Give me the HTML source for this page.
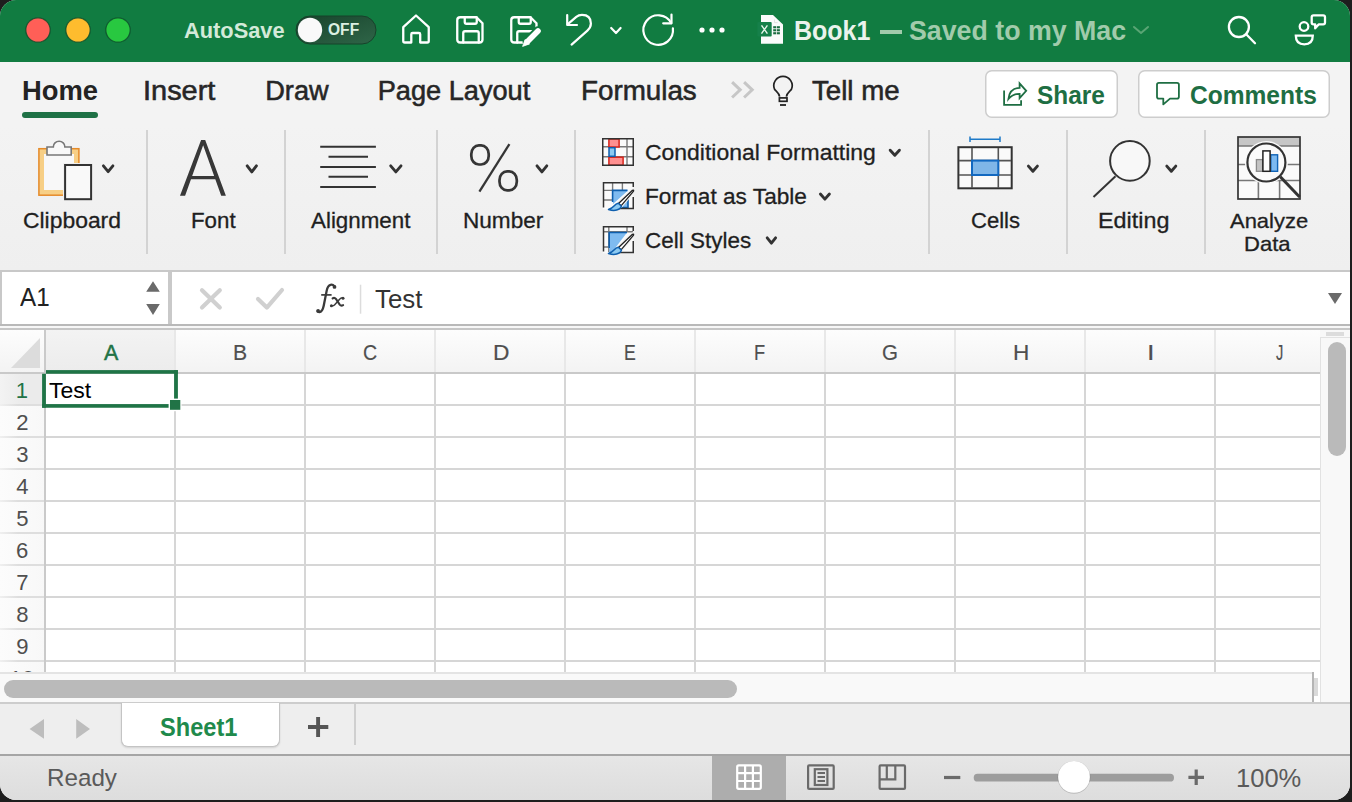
<!DOCTYPE html>
<html><head><meta charset="utf-8"><title>Excel</title>
<style>
html,body{margin:0;padding:0;width:1352px;height:802px;overflow:hidden;background:#1e1e1e;}
#win{position:absolute;left:0;top:0;width:1350px;height:800px;border-radius:16px;overflow:hidden;background:#f0f0f0;}
.t{position:absolute;white-space:nowrap;transform-origin:0 0;}
.a{position:absolute;}
svg{position:absolute;overflow:visible;}
</style></head><body><div id="win">
<div class="a" style="left:0px;top:0px;width:1350px;height:62px;background:#117c41;"></div>
<div class="a" style="left:0px;top:62px;width:1350px;height:64px;background:#f3f3f3;"></div>
<div class="a" style="left:0px;top:126px;width:1350px;height:144px;background:linear-gradient(#f3f3f3,#efefef);"></div>
<div class="a" style="left:0px;top:270px;width:1350px;height:2px;background:#c8c8c8;"></div>
<div class="a" style="left:0px;top:272px;width:1350px;height:52px;background:#ffffff;"></div>
<div class="a" style="left:0px;top:272px;width:2px;height:52px;background:#c8c8c8;"></div>
<div class="a" style="left:168px;top:272px;width:4px;height:52px;background:#c9c9c9;"></div>
<div class="a" style="left:0px;top:324px;width:1350px;height:2px;background:#b9b9b9;"></div>
<div class="a" style="left:0px;top:326px;width:1350px;height:3px;background:#f7f7f7;"></div>
<div class="a" style="left:0px;top:328px;width:1350px;height:2px;background:#c6c6c6;"></div>
<div class="a" style="left:0px;top:330px;width:1320px;height:342px;background:#ffffff;"></div>
<div class="a" style="left:0px;top:330px;width:1320px;height:43px;background:linear-gradient(#fdfdfd,#f3f3f3);"></div>
<div class="a" style="left:46px;top:330px;width:129px;height:43px;background:linear-gradient(#f3f3f3,#ececec);"></div>
<div class="a" style="left:0px;top:373px;width:45px;height:299px;background:linear-gradient(90deg,#fcfcfc,#f8f8f8);"></div>
<div class="a" style="left:0px;top:373px;width:45px;height:32px;background:linear-gradient(90deg,#f3f3f3,#ebebeb 50%);"></div>
<div class="a" style="left:46px;top:404px;width:1274px;height:2px;background:#d6d6d6;"></div>
<div class="a" style="left:0px;top:404px;width:45px;height:2px;background:linear-gradient(90deg,#f0f0f0,#dedede 40%);"></div>
<div class="a" style="left:46px;top:436px;width:1274px;height:2px;background:#d6d6d6;"></div>
<div class="a" style="left:0px;top:436px;width:45px;height:2px;background:linear-gradient(90deg,#f0f0f0,#dedede 40%);"></div>
<div class="a" style="left:46px;top:468px;width:1274px;height:2px;background:#d6d6d6;"></div>
<div class="a" style="left:0px;top:468px;width:45px;height:2px;background:linear-gradient(90deg,#f0f0f0,#dedede 40%);"></div>
<div class="a" style="left:46px;top:500px;width:1274px;height:2px;background:#d6d6d6;"></div>
<div class="a" style="left:0px;top:500px;width:45px;height:2px;background:linear-gradient(90deg,#f0f0f0,#dedede 40%);"></div>
<div class="a" style="left:46px;top:532px;width:1274px;height:2px;background:#d6d6d6;"></div>
<div class="a" style="left:0px;top:532px;width:45px;height:2px;background:linear-gradient(90deg,#f0f0f0,#dedede 40%);"></div>
<div class="a" style="left:46px;top:564px;width:1274px;height:2px;background:#d6d6d6;"></div>
<div class="a" style="left:0px;top:564px;width:45px;height:2px;background:linear-gradient(90deg,#f0f0f0,#dedede 40%);"></div>
<div class="a" style="left:46px;top:596px;width:1274px;height:2px;background:#d6d6d6;"></div>
<div class="a" style="left:0px;top:596px;width:45px;height:2px;background:linear-gradient(90deg,#f0f0f0,#dedede 40%);"></div>
<div class="a" style="left:46px;top:628px;width:1274px;height:2px;background:#d6d6d6;"></div>
<div class="a" style="left:0px;top:628px;width:45px;height:2px;background:linear-gradient(90deg,#f0f0f0,#dedede 40%);"></div>
<div class="a" style="left:46px;top:660px;width:1274px;height:2px;background:#d6d6d6;"></div>
<div class="a" style="left:0px;top:660px;width:45px;height:2px;background:linear-gradient(90deg,#f0f0f0,#dedede 40%);"></div>
<div class="a" style="left:0px;top:692px;width:45px;height:2px;background:linear-gradient(90deg,#f0f0f0,#dedede 40%);"></div>
<div class="a" style="left:174px;top:373px;width:2px;height:299px;background:#d6d6d6;"></div>
<div class="a" style="left:174px;top:330px;width:2px;height:43px;background:#e8e8e8;"></div>
<div class="a" style="left:304px;top:373px;width:2px;height:299px;background:#d6d6d6;"></div>
<div class="a" style="left:304px;top:330px;width:2px;height:43px;background:#e8e8e8;"></div>
<div class="a" style="left:434px;top:373px;width:2px;height:299px;background:#d6d6d6;"></div>
<div class="a" style="left:434px;top:330px;width:2px;height:43px;background:#e8e8e8;"></div>
<div class="a" style="left:564px;top:373px;width:2px;height:299px;background:#d6d6d6;"></div>
<div class="a" style="left:564px;top:330px;width:2px;height:43px;background:#e8e8e8;"></div>
<div class="a" style="left:694px;top:373px;width:2px;height:299px;background:#d6d6d6;"></div>
<div class="a" style="left:694px;top:330px;width:2px;height:43px;background:#e8e8e8;"></div>
<div class="a" style="left:824px;top:373px;width:2px;height:299px;background:#d6d6d6;"></div>
<div class="a" style="left:824px;top:330px;width:2px;height:43px;background:#e8e8e8;"></div>
<div class="a" style="left:954px;top:373px;width:2px;height:299px;background:#d6d6d6;"></div>
<div class="a" style="left:954px;top:330px;width:2px;height:43px;background:#e8e8e8;"></div>
<div class="a" style="left:1084px;top:373px;width:2px;height:299px;background:#d6d6d6;"></div>
<div class="a" style="left:1084px;top:330px;width:2px;height:43px;background:#e8e8e8;"></div>
<div class="a" style="left:1214px;top:373px;width:2px;height:299px;background:#d6d6d6;"></div>
<div class="a" style="left:1214px;top:330px;width:2px;height:43px;background:#e8e8e8;"></div>
<div class="a" style="left:44px;top:330px;width:2px;height:342px;background:#cacaca;"></div>
<div class="a" style="left:0px;top:372px;width:1320px;height:2px;background:#c9c9c9;"></div>
<svg class="a" style="left:11px;top:338px" width="29" height="30"><polygon points="29,0 29,30 0,30" fill="#dcdcdc"/></svg>
<div class="a" style="left:0px;top:672px;width:1320px;height:31px;background:#ffffff;"></div>
<div class="a" style="left:0px;top:673px;width:1313px;height:29px;background:#f9f9f9;"></div>
<div class="a" style="left:0px;top:672px;width:1313px;height:1.5px;background:#e4e4e4;"></div>
<div class="a" style="left:1312px;top:672px;width:1.5px;height:30px;background:#b5b5b5;"></div>
<div class="a" style="left:1314px;top:678px;width:4px;height:18px;background:#dadada;"></div>
<div class="a" style="left:4px;top:680px;width:733px;height:18px;background:#bababa;border-radius:9px;"></div>
<div class="a" style="left:1320px;top:330px;width:30px;height:372px;background:#f8f8f8;"></div>
<div class="a" style="left:1320px;top:337px;width:1px;height:365px;background:#e2e2e2;"></div>
<div class="a" style="left:1320px;top:337px;width:30px;height:1px;background:#e2e2e2;"></div>
<div class="a" style="left:1326px;top:332px;width:18px;height:4px;background:#dcdcdc;"></div>
<div class="a" style="left:1328px;top:342px;width:18px;height:114px;background:#bababa;border-radius:9px;"></div>
<div class="a" style="left:0px;top:702px;width:1350px;height:2px;background:#cdcdcd;"></div>
<div class="a" style="left:0px;top:704px;width:1350px;height:51px;background:#eeeeee;"></div>
<div class="a" style="left:121px;top:703px;width:157px;height:43px;background:#fff;border:1.5px solid #c4c4c4;border-top:none;border-radius:0 0 7px 7px;box-shadow:0 1px 2px rgba(0,0,0,.12)"></div>
<div class="a" style="left:354px;top:704px;width:1.5px;height:41px;background:#cfcfcf;"></div>
<div class="a" style="left:0px;top:754px;width:1350px;height:2px;background:#a5a5a5;"></div>
<div class="a" style="left:0px;top:756px;width:1350px;height:44px;background:linear-gradient(#e6e6e6,#dddddd);"></div>
<div class="a" style="left:712px;top:756px;width:74px;height:44px;background:#adadad;"></div>
<svg style="left:0;top:0" width="1350" height="800" viewBox="0 0 1350 800">
<circle cx="38" cy="30" r="12.2" fill="#ff5f57" stroke="#0d4d2a" stroke-opacity="0.8" stroke-width="1.3"/>
<circle cx="78" cy="30" r="12.2" fill="#febc2e" stroke="#0d4d2a" stroke-opacity="0.8" stroke-width="1.3"/>
<circle cx="118" cy="30" r="12.2" fill="#28c840" stroke="#0d4d2a" stroke-opacity="0.8" stroke-width="1.3"/>
<defs><linearGradient id="tg" x1="0" x2="1" y1="0" y2="1"><stop offset="0" stop-color="#17432b"/><stop offset="1" stop-color="#2f6548"/></linearGradient></defs>
<rect x="296" y="16" width="80" height="28" rx="14" fill="url(#tg)" stroke="#17422b" stroke-width="1"/>
<circle cx="310" cy="30" r="12.2" fill="#f9f9f9"/>
<g fill="none" stroke="#fff" stroke-width="2.3" stroke-linejoin="round" stroke-linecap="round">
<path d="M411.3,42.5 V34.3 Q411.3,33 412.6,33 H418.9 Q420.2,33 420.2,34.3 V42.5 H427.3 Q428.75,42.5 428.75,41 V27.2 L416,15.5 L403.25,27.2 V41 Q403.25,42.5 404.7,42.5 Z"/>
<path d="M460.5,17.25 H476.5 L482.5,23.25 V39.5 Q482.5,42.5 479.5,42.5 H460.25 Q457.25,42.5 457.25,39.5 V20.25 Q457.25,17.25 460.25,17.25 Z"/>
<path d="M464.75,17.5 V22 Q464.75,23.75 466.5,23.75 H475 Q476.75,23.75 476.75,22 V17.5"/>
<path d="M463.25,42.5 V33 Q463.25,31.25 465,31.25 H477 Q478.75,31.25 478.75,33 V42.5"/>
<path d="M527,42.5 H514.25 Q511.25,42.5 511.25,39.5 V20.25 Q511.25,17.25 514.25,17.25 H530.5 L536.5,23.25 V32"/>
<path d="M518.75,17.5 V22 Q518.75,23.75 520.5,23.75 H529 Q530.75,23.75 530.75,22 V17.5"/>
<path d="M517.25,42.5 V33 Q517.25,31.25 519,31.25 H532"/>
</g>
<path d="M538,31 L527.3,41.7" stroke="#117c41" stroke-width="9.5" stroke-linecap="round"/>
<path d="M538,31 L527.3,41.7" stroke="#fff" stroke-width="5.6" stroke-linecap="round"/>
<path d="M529.5,43.9 L525.1,39.5 L522.6,46.4 Z" fill="#fff" stroke="#fff" stroke-width="0.8" stroke-linejoin="round"/>
<g fill="none" stroke="#fff" stroke-width="2.2" stroke-linecap="round" stroke-linejoin="round">
<path d="M567.2,15 V25 H577"/>
<path d="M567.8,24.2 L576.3,16.8 Q578.6,14.9 582,14.9 Q590.9,14.9 590.9,23.6 Q590.9,27.6 587.4,30.6 L571.6,44.6"/>
<path d="M611.2,28 L616,33 L620.6,28"/>
<path d="M671.2,23 A14.8,14.8 0 1 0 672.9,28.4"/>
<path d="M671.5,14.6 V23.3 H663.2"/>
</g>
<circle cx="702" cy="30" r="2.6" fill="#fff"/>
<circle cx="712" cy="30" r="2.6" fill="#fff"/>
<circle cx="722" cy="30" r="2.6" fill="#fff"/>
<path d="M761,15 H773 L783,24.5 V43.8 H761 Z" fill="#fbfbfb"/>
<path d="M774.5,19.5 V22.6 H777.6" fill="none" stroke="#d9d9d9" stroke-width="0.7"/>
<rect x="757.4" y="22.1" width="14.3" height="14.4" rx="1" fill="#16804a"/>
<path d="M761.5,25.3 L767.4,33.6 M767.4,25.3 L761.5,33.6" stroke="#e9f5ec" stroke-width="1.4"/>
<g fill="#1b6b40">
<rect x="773.2" y="26.2" width="3" height="2.1"/>
<rect x="776.9000000000001" y="26.2" width="3" height="2.1"/>
<rect x="773.2" y="29.2" width="3" height="2.1"/>
<rect x="776.9000000000001" y="29.2" width="3" height="2.1"/>
<rect x="773.2" y="32.2" width="3" height="2.1"/>
<rect x="776.9000000000001" y="32.2" width="3" height="2.1"/>
</g>
<path d="M1134,27 L1141,33 L1148,27" fill="none" stroke="#5aa574" stroke-width="2" stroke-linecap="round" stroke-linejoin="round"/>
<g fill="none" stroke="#fff" stroke-width="2.3" stroke-linecap="round">
<circle cx="1238.9" cy="27" r="10"/>
<path d="M1246.2,34.3 L1255,43.3"/>
<circle cx="1304" cy="26.5" r="4.3"/>
<path d="M1295.8,35.6 H1312.8 Q1312.8,44.4 1304.3,44.4 Q1295.8,44.4 1295.8,35.6 Z"/>
<path d="M1313.5,15.3 H1323.2 Q1325,15.3 1325,17.1 V22.6 Q1325,24.4 1323.2,24.4 H1318.6 L1315.2,28.3 V24.4 H1313.5 Q1311.7,24.4 1311.7,22.6 V17.1 Q1311.7,15.3 1313.5,15.3 Z" stroke-linejoin="round"/>
</g>
<rect x="22" y="112" width="76" height="6" rx="3" fill="#1e7145"/>
<g fill="none" stroke="#c6c6c6" stroke-width="3">
<path d="M732.1,82.1 L740.2,89.8 L732.1,97.5"/><path d="M744.1,82.1 L752.2,89.8 L744.1,97.5"/>
</g>
<g fill="none" stroke="#222" stroke-width="1.7">
<path d="M779.6,96.6 C779.4,93.4 776.4,91.6 774.6,89.4 A9.2,9.2 0 1 1 791.4,89.4 C789.6,91.6 786.6,93.4 786.4,96.6"/>
<rect x="779.4" y="97.9" width="7.6" height="3.4"/>
<path d="M780,105 H786" stroke-width="1.8"/>
</g>
<rect x="985.75" y="70.75" width="131.5" height="46.5" rx="6" fill="#fff" stroke="#cdcdcd" stroke-width="1.5"/>
<rect x="1138.75" y="70.75" width="190.5" height="46.5" rx="6" fill="#fff" stroke="#cdcdcd" stroke-width="1.5"/>
<g fill="none" stroke="#1e6e43" stroke-width="1.8">
<path d="M1004.1,90.4 V104.9 H1021.1 V100.2"/>
<path d="M1008.4,99 Q1009.6,88.3 1019.6,87.8 V83.4 L1026.2,90.8 L1019.6,98.2 V93.8 Q1012.5,93.8 1008.4,99 Z" stroke-linejoin="miter"/>
<path d="M1158.9,82.9 H1177 Q1178.9,82.9 1178.9,84.8 V96.7 Q1178.9,98.6 1177,98.6 H1170 L1163.3,104.4 V98.6 H1158.9 Q1157,98.6 1157,96.7 V84.8 Q1157,82.9 1158.9,82.9 Z" stroke-linejoin="round"/>
</g>
<rect x="146" y="130" width="2" height="124" fill="#d3d3d3"/>
<rect x="284" y="130" width="2" height="124" fill="#d3d3d3"/>
<rect x="436" y="130" width="2" height="124" fill="#d3d3d3"/>
<rect x="574" y="130" width="2" height="124" fill="#d3d3d3"/>
<rect x="928" y="130" width="2" height="124" fill="#d3d3d3"/>
<rect x="1066" y="130" width="2" height="124" fill="#d3d3d3"/>
<rect x="1204" y="130" width="2" height="124" fill="#d3d3d3"/>
<path d="M103.4,165.9 L108.15,171.6 L112.89999999999999,165.9" fill="none" stroke="#333" stroke-width="2.9" stroke-linecap="round" stroke-linejoin="round"/>
<path d="M247.20000000000002,165.8 L251.8,171.9 L256.40000000000003,165.8" fill="none" stroke="#333" stroke-width="2.9" stroke-linecap="round" stroke-linejoin="round"/>
<path d="M390.7,165.9 L395.85,171.9 L401.0,165.9" fill="none" stroke="#333" stroke-width="2.9" stroke-linecap="round" stroke-linejoin="round"/>
<path d="M537.0,165.9 L541.9000000000001,171.9 L546.8000000000001,165.9" fill="none" stroke="#333" stroke-width="2.9" stroke-linecap="round" stroke-linejoin="round"/>
<path d="M1028.4,166.1 L1032.9,171.29999999999998 L1037.3999999999999,166.1" fill="none" stroke="#333" stroke-width="2.9" stroke-linecap="round" stroke-linejoin="round"/>
<path d="M1166.8000000000002,166.1 L1171.3000000000002,171.29999999999998 L1175.8,166.1" fill="none" stroke="#333" stroke-width="2.9" stroke-linecap="round" stroke-linejoin="round"/>
<path d="M890.1999999999999,150.20000000000002 L894.8,155.29999999999998 L899.4,150.20000000000002" fill="none" stroke="#333" stroke-width="2.9" stroke-linecap="round" stroke-linejoin="round"/>
<path d="M820.4,194.0 L824.9,199.1 L829.4,194.0" fill="none" stroke="#333" stroke-width="2.9" stroke-linecap="round" stroke-linejoin="round"/>
<path d="M767.1999999999999,237.9 L771.4,243.1 L775.6,237.9" fill="none" stroke="#333" stroke-width="2.9" stroke-linecap="round" stroke-linejoin="round"/>
<rect x="38.9" y="148.7" width="40" height="46.5" fill="#f7cf86" stroke="#e58b2a" stroke-width="1.5"/>
<rect x="44" y="154" width="30" height="36" fill="#f8f8f8"/>
<path d="M47,155 V147 H53.3 A5.8,5.8 0 0 1 64.9,147 H71.2 V155 Z" fill="#f8f8f8" stroke="#777" stroke-width="1.6"/>
<rect x="63" y="163" width="30" height="38" fill="#f0f0f0"/>
<rect x="65.1" y="165" width="26" height="34.2" fill="#f9f9f9" stroke="#333" stroke-width="2"/>
<path d="M180,195.7 L201.1,140 H205.2 L225.9,195.7 H221.2 L203.15,145.3 L185.1,195.7 Z M190.5,176 H215.8 L217,179.2 H189.4 Z" fill="#383838"/>
<g stroke="#333" stroke-width="2">
<path d="M320.2,146.7 H375.9 M328.5,156.7 H368 M320.2,166.9 H375.9 M328.5,176.8 H368 M320.2,187 H375.9"/>
</g>
<g fill="none" stroke="#353535" stroke-width="2.7">
<rect x="471.3" y="145.3" width="17.4" height="19.2" rx="7.6" ry="8.6"/>
<rect x="499.5" y="171.4" width="17.3" height="19" rx="7.6" ry="8.6"/>
</g>
<path d="M509.4,144.1 L479.4,191.7" stroke="#353535" stroke-width="2.3"/>
<rect x="602.75" y="138.75" width="30.5" height="26.5" fill="#fbfbfb"/>
<g stroke="#7a7a7a" stroke-width="1.4"><path d="M627,139 V165 M603,146.7 H633 M603,156.7 H633"/></g>
<rect x="608.9" y="139" width="10.2" height="8" fill="#ff9090" stroke="#d8261c" stroke-width="1.5"/>
<rect x="608.9" y="157.2" width="14.2" height="8" fill="#ff9090" stroke="#d8261c" stroke-width="1.5"/>
<rect x="609" y="147.7" width="6" height="8.6" fill="#8ccaf2" stroke="#0f5fae" stroke-width="1.5"/>
<rect x="602.75" y="138.75" width="30.5" height="26.5" fill="none" stroke="#333" stroke-width="1.5"/>
<rect x="602.75" y="182.75" width="30.5" height="26.5" fill="#fbfbfb"/>
<g stroke="#7a7a7a" stroke-width="1.4"><path d="M612.6,183 V190 M622.4,183 V190 M603,190.4 H612 M603,200 H612"/></g>
<path d="M612.6,190.4 H628 L613,204 Z M628,198 V207.6 H619.5 Z" fill="#7fbbf0"/>
<path d="M612.6,202 V190.4 H627.5 M628,198 V207.6 H620" fill="none" stroke="#0e5fae" stroke-width="1.6"/>
<path d="M603.5,207.5 V182.75 H633.25 V187" fill="none" stroke="#333" stroke-width="1.5"/>
<path d="M633.25,197 V208.5 H618" fill="none" stroke="#333" stroke-width="1.5"/>
<path d="M618.5,203.5 L632.5,190.3 Q634.2,189.5 633.4,191.4 L621,205.8 Z" fill="#fff" stroke="#f0f0f0" stroke-width="3.5" stroke-linejoin="round"/>
<path d="M618.5,203.5 L632.5,190.3 Q634.2,189.5 633.4,191.4 L621,205.8 Z" fill="#fff" stroke="#222" stroke-width="1.3" stroke-linejoin="round"/>
<path d="M618.3,203.2 Q616,203.6 614,206 Q612.3,208 608.5,209.5 Q615,211.5 619.2,209 Q621.5,207.4 621.3,206 Z" fill="#8ccaf2" stroke="#0e5fae" stroke-width="1.5" stroke-linejoin="round"/>
<rect x="602.75" y="226.75" width="30.5" height="26.5" fill="#fbfbfb"/>
<g stroke="#7a7a7a" stroke-width="1.4"><path d="M608.8,227 V252 M627,227 V232 M603,231.8 H633 M603,247 H608"/></g>
<path d="M609.2,253 V232.5 H627 L613,251 Z" fill="#7fbbf0"/>
<path d="M609.2,248 V232.5 H627" fill="none" stroke="#0e5fae" stroke-width="1.6"/>
<path d="M603.5,251.5 V226.75 H633.25 V231" fill="none" stroke="#333" stroke-width="1.5"/>
<path d="M633.25,241 V252.5 H618" fill="none" stroke="#333" stroke-width="1.5"/>
<path d="M618.5,247.5 L632.5,234.3 Q634.2,233.5 633.4,235.4 L621,249.8 Z" fill="#fff" stroke="#f0f0f0" stroke-width="3.5" stroke-linejoin="round"/>
<path d="M618.5,247.5 L632.5,234.3 Q634.2,233.5 633.4,235.4 L621,249.8 Z" fill="#fff" stroke="#222" stroke-width="1.3" stroke-linejoin="round"/>
<path d="M618.3,247.2 Q616,247.6 614,250 Q612.3,252 608.5,253.5 Q615,255.5 619.2,253 Q621.5,251.4 621.3,250 Z" fill="#8ccaf2" stroke="#0e5fae" stroke-width="1.5" stroke-linejoin="round"/>
<rect x="958.4" y="147.2" width="53.3" height="41.1" fill="#fafafa" stroke="#333" stroke-width="2"/>
<g stroke="#555" stroke-width="1.6"><path d="M972,148 V188 M998.3,148 V188 M959,160.6 H1011 M959,175 H1011"/></g>
<rect x="972" y="160.6" width="26.3" height="14.4" fill="#7fb6e8" stroke="#1268c0" stroke-width="2"/>
<g stroke="#1e7ac8" stroke-width="1.5"><path d="M970,139.2 H1000 M970,136.5 V142 M1000,136.5 V142"/></g>
<g fill="none" stroke="#333" stroke-width="2"><circle cx="1129.9" cy="160.9" r="19.8" fill="#f8f8f8"/><path d="M1115.5,176.3 L1093.5,197"/></g>
<rect x="1238" y="137" width="62" height="62" fill="#fafafa"/>
<rect x="1238" y="137" width="62" height="9" fill="#c6c6c6"/>
<g stroke="#777" stroke-width="1.6"><path d="M1238,146 H1300 M1238,164.5 H1300 M1238,180.5 H1300 M1258.4,180.5 V199 M1279.6,180.5 V199"/></g>
<rect x="1238" y="137" width="62" height="62" fill="none" stroke="#333" stroke-width="1.7"/>
<circle cx="1266.4" cy="162.5" r="21.5" fill="#fafafa"/>
<circle cx="1266.4" cy="162.5" r="19" fill="#fafafa" stroke="#333" stroke-width="2.2"/>
<path d="M1280.3,176.8 L1299.6,197" stroke="#333" stroke-width="3"/>
<rect x="1256.4" y="159.6" width="6.2" height="11.7" fill="#c3c3c3" stroke="#8a8a8a" stroke-width="1.3"/>
<rect x="1270.8" y="154.8" width="6.8" height="16.5" fill="#7cb9f0" stroke="#1063b6" stroke-width="1.4"/>
<rect x="1262.9" y="150.9" width="7.2" height="20.4" fill="#fff" stroke="#222" stroke-width="1.5"/>
<path d="M146.2,291.7 L153,281.3 L159.8,291.7 Z M146.2,304.1 L159.8,304.1 L153,314.9 Z" fill="#6a6a6a"/>
<path d="M202,290.2 L219.8,307.5 M219.8,290.2 L202,307.5" stroke="#d0d0d0" stroke-width="4.2" stroke-linecap="round"/>
<path d="M258,299 L266.8,307.6 L282,290" fill="none" stroke="#d0d0d0" stroke-width="4.2" stroke-linecap="round" stroke-linejoin="round"/>
<g fill="none" stroke="#3a3a3a" stroke-linecap="round">
<path d="M334.4,286.2 Q332.8,284.3 330.6,284.8 Q327.6,285.6 326.7,290.6 L323.7,305.8 Q322.5,311.8 319.4,312.1 Q318,312.2 317.7,311.2" stroke-width="2.3"/>
<path d="M321.2,294.9 H331.6" stroke-width="1.7" stroke-linecap="butt"/>
<path d="M332.6,298.4 Q334.6,297 336.1,299.2 L339.7,304.6 Q341.1,306.3 343.1,305.2" stroke-width="2.1"/>
<path d="M342.9,297.9 Q341.2,297.5 339.4,299.5 L334.7,304.7 Q333.2,306.3 331.6,305.7" stroke-width="1.5"/>
</g>
<g fill="#3a3a3a"><circle cx="334.5" cy="286.9" r="1.9"/><circle cx="318.1" cy="310.9" r="1.9"/><circle cx="343" cy="298.2" r="1.5"/><circle cx="331.4" cy="305.8" r="1.5"/></g>
<rect x="359.8" y="284.7" width="1.5" height="29" fill="#dcdcdc"/>
<path d="M1328,293 H1342 L1335,304 Z" fill="#6a6a6a"/>
<g fill="#1f7446"><rect x="46" y="370.1" width="131.9" height="3.65"/><rect x="42.1" y="373.75" width="3.8" height="34"/><rect x="42.1" y="404.1" width="135.8" height="3.65"/><rect x="174.1" y="370.1" width="3.8" height="37.65"/></g>
<rect x="168.6" y="398.6" width="13" height="12.6" fill="#fff"/>
<rect x="170" y="400" width="10.3" height="9.8" fill="#217346"/>
<path d="M44,719 V738.8 L29.6,728.9 Z M76.2,719 V738.8 L90,728.9 Z" fill="#bdbdbd"/>
<path d="M318.1,717 V737 M308,727 H328.3" stroke="#555" stroke-width="3.9"/>
<g fill="none" stroke="#fff" stroke-width="2.2"><rect x="737.2" y="765.4" width="23.6" height="23.4" rx="1.5"/><path d="M745.1,765.4 V788.8 M752.9,765.4 V788.8 M737.2,773.2 H760.8 M737.2,781 H760.8"/></g>
<g fill="none" stroke="#6a6a6a" stroke-width="2.2"><rect x="808.1" y="765.4" width="25.6" height="23.5" rx="1"/><rect x="814.8" y="769.2" width="12.6" height="15.8"/></g>
<g stroke="#6a6a6a" stroke-width="1.8"><path d="M817.5,773 H825 M817.5,777 H825 M817.5,781 H825"/></g>
<g fill="none" stroke="#6a6a6a" stroke-width="2.2"><rect x="879.6" y="765.4" width="25.4" height="23.5" rx="1"/><path d="M886.8,765.4 V779.3 H895.3 V765.4 M879.6,779.3 H886.8"/></g>
<path d="M944,777.5 H960.3" stroke="#6a6a6a" stroke-width="3.2"/>
<path d="M1188.4,777.3 H1204 M1196.2,769.4 V785" stroke="#6a6a6a" stroke-width="3.2"/>
<rect x="973.7" y="773.8" width="200.3" height="7.8" rx="3.9" fill="#9d9d9d"/>
<circle cx="1074" cy="777.3" r="16.4" fill="rgba(0,0,0,0.16)"/>
<circle cx="1074" cy="776.9" r="15.9" fill="#ffffff"/>
</svg>
<div class="t" style="left:184.05px;top:20.00px;font-size:22.53px;line-height:22.53px;font-weight:bold;font-style:normal;font-family:'Liberation Sans', sans-serif;color:#d3ead9;transform:scaleX(0.9686);">AutoSave</div>
<div class="t" style="left:328.38px;top:21.00px;font-size:16.13px;line-height:16.13px;font-weight:bold;font-style:normal;font-family:'Liberation Sans', sans-serif;color:#dcefe2;transform:scaleX(0.9672);">OFF</div>
<div class="t" style="left:794.21px;top:17.00px;font-size:27.62px;line-height:27.62px;font-weight:bold;font-style:normal;font-family:'Liberation Sans', sans-serif;color:#eaf3ec;transform:scaleX(0.9053);">Book1</div>
<div class="a" style="left:880px;top:30.2px;width:22px;height:3.8px;background:#a1cbab"></div>
<div class="t" style="left:909.20px;top:17.00px;font-size:28.05px;line-height:28.05px;font-weight:bold;font-style:normal;font-family:'Liberation Sans', sans-serif;color:#a1cbab;transform:scaleX(0.9541);">Saved to my Mac</div>
<div class="t" style="left:21.55px;top:78.00px;font-size:26.89px;line-height:26.89px;font-weight:bold;font-style:normal;font-family:'Liberation Sans', sans-serif;color:#232323;transform:scaleX(1.0181);">Home</div>
<div class="t" style="left:142.82px;top:77.00px;font-size:27.18px;line-height:27.18px;font-weight:normal;font-style:normal;font-family:'Liberation Sans', sans-serif;color:#262626;transform:scaleX(1.0654);-webkit-text-stroke:0.55px #262626;">Insert</div>
<div class="t" style="left:265.25px;top:77.00px;font-size:27.18px;line-height:27.18px;font-weight:normal;font-style:normal;font-family:'Liberation Sans', sans-serif;color:#262626;-webkit-text-stroke:0.55px #262626;">Draw</div>
<div class="t" style="left:377.66px;top:77.00px;font-size:27.18px;line-height:27.18px;font-weight:normal;font-style:normal;font-family:'Liberation Sans', sans-serif;color:#262626;-webkit-text-stroke:0.55px #262626;">Page Layout</div>
<div class="t" style="left:581.21px;top:77.00px;font-size:27.18px;line-height:27.18px;font-weight:normal;font-style:normal;font-family:'Liberation Sans', sans-serif;color:#262626;transform:scaleX(1.0220);-webkit-text-stroke:0.55px #262626;">Formulas</div>
<div class="t" style="left:812.38px;top:77.00px;font-size:27.18px;line-height:27.18px;font-weight:normal;font-style:normal;font-family:'Liberation Sans', sans-serif;color:#262626;transform:scaleX(1.0175);-webkit-text-stroke:0.55px #262626;">Tell me</div>
<div class="t" style="left:1036.97px;top:83.00px;font-size:25.73px;line-height:25.73px;font-weight:bold;font-style:normal;font-family:'Liberation Sans', sans-serif;color:#1e6e43;transform:scaleX(0.9492);">Share</div>
<div class="t" style="left:1190.02px;top:83.00px;font-size:25.58px;line-height:25.58px;font-weight:bold;font-style:normal;font-family:'Liberation Sans', sans-serif;color:#1e6e43;transform:scaleX(0.9597);">Comments</div>
<div class="t" style="left:23.26px;top:210.00px;font-size:21.22px;line-height:21.22px;font-weight:normal;font-style:normal;font-family:'Liberation Sans', sans-serif;color:#1f1f1f;transform:scaleX(1.0787);-webkit-text-stroke:0.3px #1f1f1f;">Clipboard</div>
<div class="t" style="left:191.16px;top:210.00px;font-size:21.22px;line-height:21.22px;font-weight:normal;font-style:normal;font-family:'Liberation Sans', sans-serif;color:#1f1f1f;transform:scaleX(1.0510);-webkit-text-stroke:0.3px #1f1f1f;">Font</div>
<div class="t" style="left:310.74px;top:210.00px;font-size:21.66px;line-height:21.66px;font-weight:normal;font-style:normal;font-family:'Liberation Sans', sans-serif;color:#1f1f1f;transform:scaleX(1.0322);-webkit-text-stroke:0.3px #1f1f1f;">Alignment</div>
<div class="t" style="left:462.74px;top:210.00px;font-size:21.66px;line-height:21.66px;font-weight:normal;font-style:normal;font-family:'Liberation Sans', sans-serif;color:#1f1f1f;transform:scaleX(1.0430);-webkit-text-stroke:0.3px #1f1f1f;">Number</div>
<div class="t" style="left:645.45px;top:142.00px;font-size:22.09px;line-height:22.09px;font-weight:normal;font-style:normal;font-family:'Liberation Sans', sans-serif;color:#1f1f1f;transform:scaleX(1.0393);-webkit-text-stroke:0.3px #1f1f1f;">Conditional Formatting</div>
<div class="t" style="left:644.73px;top:186.00px;font-size:22.09px;line-height:22.09px;font-weight:normal;font-style:normal;font-family:'Liberation Sans', sans-serif;color:#1f1f1f;transform:scaleX(1.0258);-webkit-text-stroke:0.3px #1f1f1f;">Format as Table</div>
<div class="t" style="left:645.48px;top:230.00px;font-size:22.38px;line-height:22.38px;font-weight:normal;font-style:normal;font-family:'Liberation Sans', sans-serif;color:#1f1f1f;transform:scaleX(1.0042);-webkit-text-stroke:0.3px #1f1f1f;">Cell Styles</div>
<div class="t" style="left:970.70px;top:210.00px;font-size:21.80px;line-height:21.80px;font-weight:normal;font-style:normal;font-family:'Liberation Sans', sans-serif;color:#1f1f1f;transform:scaleX(1.0128);-webkit-text-stroke:0.3px #1f1f1f;">Cells</div>
<div class="t" style="left:1097.67px;top:210.00px;font-size:21.80px;line-height:21.80px;font-weight:normal;font-style:normal;font-family:'Liberation Sans', sans-serif;color:#1f1f1f;transform:scaleX(1.0709);-webkit-text-stroke:0.3px #1f1f1f;">Editing</div>
<div class="t" style="left:1229.95px;top:212.00px;font-size:19.62px;line-height:19.62px;font-weight:normal;font-style:normal;font-family:'Liberation Sans', sans-serif;color:#1f1f1f;transform:scaleX(1.1201);-webkit-text-stroke:0.3px #1f1f1f;">Analyze</div>
<div class="t" style="left:1244.08px;top:235.00px;font-size:19.48px;line-height:19.48px;font-weight:normal;font-style:normal;font-family:'Liberation Sans', sans-serif;color:#1f1f1f;transform:scaleX(1.1320);-webkit-text-stroke:0.3px #1f1f1f;">Data</div>
<div class="t" style="left:20.34px;top:284.00px;font-size:26.45px;line-height:26.45px;font-weight:normal;font-style:normal;font-family:'Liberation Sans', sans-serif;color:#222222;transform:scaleX(0.9156);">A1</div>
<div class="t" style="left:375.42px;top:286.00px;font-size:26.45px;line-height:26.45px;font-weight:normal;font-style:normal;font-family:'Liberation Sans', sans-serif;color:#333333;transform:scaleX(0.9773);">Test</div>
<div class="t" style="left:103.95px;top:341.00px;font-size:22.67px;line-height:22.67px;font-weight:normal;font-style:normal;font-family:'Liberation Sans', sans-serif;color:#217346;transform:scaleX(0.9453);-webkit-text-stroke:0.5px #217346;">A</div>
<div class="t" style="left:233.05px;top:341.00px;font-size:22.67px;line-height:22.67px;font-weight:normal;font-style:normal;font-family:'Liberation Sans', sans-serif;color:#4f4f4f;transform:scaleX(0.9359);-webkit-text-stroke:0.2px #5a5a5a;">B</div>
<div class="t" style="left:363.42px;top:341.00px;font-size:22.67px;line-height:22.67px;font-weight:normal;font-style:normal;font-family:'Liberation Sans', sans-serif;color:#4f4f4f;transform:scaleX(0.8646);-webkit-text-stroke:0.2px #5a5a5a;">C</div>
<div class="t" style="left:492.72px;top:341.00px;font-size:22.67px;line-height:22.67px;font-weight:normal;font-style:normal;font-family:'Liberation Sans', sans-serif;color:#4f4f4f;transform:scaleX(1.0049);-webkit-text-stroke:0.2px #5a5a5a;">D</div>
<div class="t" style="left:623.84px;top:341.00px;font-size:22.67px;line-height:22.67px;font-weight:normal;font-style:normal;font-family:'Liberation Sans', sans-serif;color:#4f4f4f;transform:scaleX(0.7804);-webkit-text-stroke:0.2px #5a5a5a;">E</div>
<div class="t" style="left:753.99px;top:341.00px;font-size:22.67px;line-height:22.67px;font-weight:normal;font-style:normal;font-family:'Liberation Sans', sans-serif;color:#4f4f4f;transform:scaleX(0.8052);-webkit-text-stroke:0.2px #5a5a5a;">F</div>
<div class="t" style="left:881.87px;top:341.00px;font-size:22.67px;line-height:22.67px;font-weight:normal;font-style:normal;font-family:'Liberation Sans', sans-serif;color:#4f4f4f;transform:scaleX(0.9057);-webkit-text-stroke:0.2px #5a5a5a;">G</div>
<div class="t" style="left:1013.24px;top:341.00px;font-size:22.67px;line-height:22.67px;font-weight:normal;font-style:normal;font-family:'Liberation Sans', sans-serif;color:#4f4f4f;transform:scaleX(0.9968);-webkit-text-stroke:0.2px #5a5a5a;">H</div>
<div class="t" style="left:1147.10px;top:341.00px;font-size:22.67px;line-height:22.67px;font-weight:normal;font-style:normal;font-family:'Liberation Sans', sans-serif;color:#4f4f4f;transform:scaleX(1.1920);-webkit-text-stroke:0.2px #5a5a5a;">I</div>
<div class="t" style="left:1275.98px;top:341.00px;font-size:22.67px;line-height:22.67px;font-weight:normal;font-style:normal;font-family:'Liberation Sans', sans-serif;color:#4f4f4f;transform:scaleX(0.6454);-webkit-text-stroke:0.2px #5a5a5a;">J</div>
<div class="t" style="left:15.87px;top:380.00px;font-size:22.09px;line-height:22.09px;font-weight:normal;font-style:normal;font-family:'Liberation Sans', sans-serif;color:#217346;">1</div>
<div class="t" style="left:16.17px;top:412.00px;font-size:22.09px;line-height:22.09px;font-weight:normal;font-style:normal;font-family:'Liberation Sans', sans-serif;color:#4f4f4f;">2</div>
<div class="t" style="left:16.22px;top:444.00px;font-size:22.09px;line-height:22.09px;font-weight:normal;font-style:normal;font-family:'Liberation Sans', sans-serif;color:#4f4f4f;">3</div>
<div class="t" style="left:16.22px;top:476.00px;font-size:22.09px;line-height:22.09px;font-weight:normal;font-style:normal;font-family:'Liberation Sans', sans-serif;color:#4f4f4f;">4</div>
<div class="t" style="left:16.17px;top:508.00px;font-size:22.09px;line-height:22.09px;font-weight:normal;font-style:normal;font-family:'Liberation Sans', sans-serif;color:#4f4f4f;">5</div>
<div class="t" style="left:16.09px;top:540.00px;font-size:22.09px;line-height:22.09px;font-weight:normal;font-style:normal;font-family:'Liberation Sans', sans-serif;color:#4f4f4f;">6</div>
<div class="t" style="left:16.14px;top:572.00px;font-size:22.09px;line-height:22.09px;font-weight:normal;font-style:normal;font-family:'Liberation Sans', sans-serif;color:#4f4f4f;">7</div>
<div class="t" style="left:16.17px;top:604.00px;font-size:22.09px;line-height:22.09px;font-weight:normal;font-style:normal;font-family:'Liberation Sans', sans-serif;color:#4f4f4f;">8</div>
<div class="t" style="left:16.14px;top:636.00px;font-size:22.09px;line-height:22.09px;font-weight:normal;font-style:normal;font-family:'Liberation Sans', sans-serif;color:#4f4f4f;">9</div>
<div class="a" style="left:0;top:662px;width:45px;height:10px;overflow:hidden"><div class="t" style="left:9.62px;top:6.00px;font-size:22.09px;line-height:22.09px;font-weight:normal;font-style:normal;font-family:'Liberation Sans', sans-serif;color:#4f4f4f;">10</div></div>
<div class="t" style="left:49.48px;top:380.00px;font-size:21.80px;line-height:21.80px;font-weight:normal;font-style:normal;font-family:'Liberation Sans', sans-serif;color:#000000;transform:scaleX(1.0560);">Test</div>
<div class="t" style="left:160.29px;top:715.00px;font-size:25.58px;line-height:25.58px;font-weight:bold;font-style:normal;font-family:'Liberation Sans', sans-serif;color:#1f8a4c;transform:scaleX(0.9226);">Sheet1</div>
<div class="t" style="left:47.30px;top:767.00px;font-size:23.26px;line-height:23.26px;font-weight:normal;font-style:normal;font-family:'Liberation Sans', sans-serif;color:#5a5a5a;transform:scaleX(1.0409);">Ready</div>
<div class="t" style="left:1236.49px;top:766.00px;font-size:25.29px;line-height:25.29px;font-weight:normal;font-style:normal;font-family:'Liberation Sans', sans-serif;color:#5a5a5a;transform:scaleX(1.0091);">100%</div>
</div></body></html>
